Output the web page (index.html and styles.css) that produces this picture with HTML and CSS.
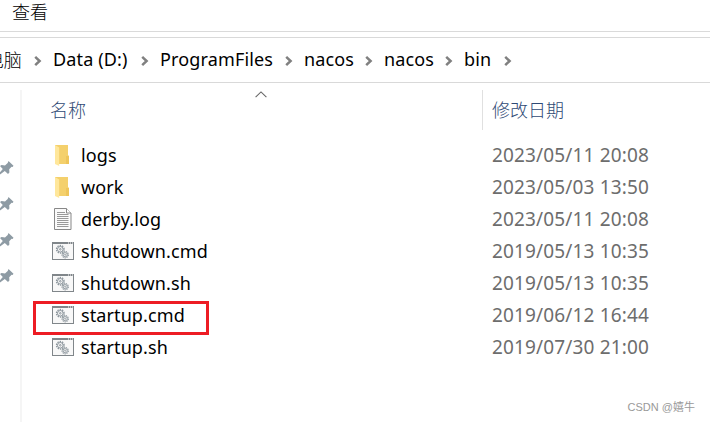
FILE: index.html
```
<!DOCTYPE html>
<html lang="zh-CN">
<head>
    <meta charset="UTF-8">
    <meta name="viewport" content="width=device-width, initial-scale=1.0">
    <title>bin</title>
    <link rel="stylesheet" href="styles.css">
</head>
<body>
    <!-- shared icons -->
    <svg class="sprite">
        <symbol id="chevron" viewBox="0 0 8 10">
            <path d="M1.2 0.9L5.6 5L1.2 9.1" fill="none" stroke="#808080" stroke-width="2.5"/>
        </symbol>
        <symbol id="pin" viewBox="0 0 14 16">
            <path d="M8.5 1L13.5 5.8L12.6 6.9L11.6 6.7L9.2 9.3L9.4 12.5L8 14L4.8 10.9L0 14.5L-1 13.5L2.8 9.1L0 6L1.5 5L5 5.4L7.7 3Z" fill="#8e9ba4"/>
        </symbol>
        <symbol id="folder" viewBox="0 0 16 22">
            <path d="M1 1H14V11L15 12V20H1Z" fill="#f4d06c"/>
            <path d="M12 12H15V20H12Z" fill="#eec55b"/>
            <path d="M1 1L5.2 3.5V22L1 20Z" fill="#ffe79b"/>
        </symbol>
        <symbol id="text-file" viewBox="0 0 18 22">
            <path d="M0.5 0.5H12.5L17 5V21.5H0.5Z" fill="#fafafa" stroke="#888" stroke-width="1"/>
            <path d="M12.5 0.5V5H17" fill="#fff" stroke="#888" stroke-width="1"/>
            <path d="M3 4.5H11M3 6.5H14.5M3 8.5H14.5M3 10.5H14.5M3 12.5H14.5M3 14.5H14.5M3 16.5H14.5M3 18.5H14.5" stroke="#999" stroke-width="1"/>
        </symbol>
        <symbol id="script-file" viewBox="0 0 22 18">
            <rect x="0.5" y="0.5" width="21" height="17" fill="#f8f8f8" stroke="#80868a"/>
            <path d="M0 1H22" stroke="#80868a" stroke-width="2"/>
            <path d="M16 1H17M18 1H19M20 1H21" stroke="#fff"/>
            <g fill="none" stroke="#8a949b">
                <circle cx="8.3" cy="7.3" r="3.8" stroke-width="1.3" stroke-dasharray="1.4 1"/>
                <circle cx="8.3" cy="7.3" r="2.8"/>
                <circle cx="8.3" cy="7.3" r="0.8"/>
                <circle cx="13.2" cy="12.7" r="3.1" stroke-width="1.2" stroke-dasharray="1.3 0.8"/>
                <circle cx="13.2" cy="12.7" r="2.1" stroke-width="0.9"/>
                <circle cx="13.2" cy="12.7" r="0.6" stroke-width="0.8"/>
            </g>
        </symbol>
    </svg>

    <div class="explorer">
        <div class="menu-bar">查看</div>
        <nav class="path-bar">
            <span class="crumb crumb-pc">电脑</span>
            <svg class="chevron"><use href="#chevron"/></svg>
            <span class="crumb crumb-drive">Data (D:)</span>
            <svg class="chevron"><use href="#chevron"/></svg>
            <span class="crumb crumb-programs">ProgramFiles</span>
            <svg class="chevron"><use href="#chevron"/></svg>
            <span class="crumb crumb-nacos">nacos</span>
            <svg class="chevron"><use href="#chevron"/></svg>
            <span class="crumb crumb-nacos">nacos</span>
            <svg class="chevron"><use href="#chevron"/></svg>
            <span class="crumb crumb-bin">bin</span>
            <svg class="chevron"><use href="#chevron"/></svg>
        </nav>
        <div class="content">
            <aside class="sidebar">
                <svg class="pin"><use href="#pin"/></svg>
                <svg class="pin"><use href="#pin"/></svg>
                <svg class="pin"><use href="#pin"/></svg>
                <svg class="pin"><use href="#pin"/></svg>
            </aside>
            <main class="files">
                <div class="header">
                    <div class="header-name">名称
                        <svg class="sort" viewBox="0 0 12 7"><path d="M0.6 6.2L6 0.9L11.4 6.2" fill="none" stroke="#666" stroke-width="1.1"/></svg>
                    </div>
                    <div class="header-date">修改日期</div>
                </div>
                <div class="row">
                    <svg class="icon"><use href="#folder" x="2" y="1" width="16" height="22"/></svg>
                    <span class="name">logs</span>
                    <span class="date">2023/05/11 20:08</span>
                </div>
                <div class="row">
                    <svg class="icon"><use href="#folder" x="2" y="1" width="16" height="22"/></svg>
                    <span class="name">work</span>
                    <span class="date">2023/05/03 13:50</span>
                </div>
                <div class="row">
                    <svg class="icon"><use href="#text-file" x="2" y="1" width="18" height="22"/></svg>
                    <span class="name">derby.log</span>
                    <span class="date">2023/05/11 20:08</span>
                </div>
                <div class="row">
                    <svg class="icon"><use href="#script-file" x="0" y="3" width="22" height="18"/></svg>
                    <span class="name">shutdown.cmd</span>
                    <span class="date">2019/05/13 10:35</span>
                </div>
                <div class="row">
                    <svg class="icon"><use href="#script-file" x="0" y="3" width="22" height="18"/></svg>
                    <span class="name">shutdown.sh</span>
                    <span class="date">2019/05/13 10:35</span>
                </div>
                <div class="row marked">
                    <svg class="icon"><use href="#script-file" x="0" y="3" width="22" height="18"/></svg>
                    <span class="name">startup.cmd</span>
                    <span class="date">2019/06/12 16:44</span>
                </div>
                <div class="row">
                    <svg class="icon"><use href="#script-file" x="0" y="3" width="22" height="18"/></svg>
                    <span class="name">startup.sh</span>
                    <span class="date">2019/07/30 21:00</span>
                </div>
            </main>
        </div>
        <div class="watermark">CSDN @嬉牛</div>
    </div>
</body>
</html>
```
FILE: styles.css
```
* {
    box-sizing: border-box;
}
body {
    margin: 0;
    background-color: #fff;
    font-family: "Noto Sans", "Noto Sans CJK SC", sans-serif;
    font-size: 18px;
    line-height: 24px;
    color: #000;
}
svg {
    display: block;
    flex-shrink: 0;
}
.sprite {
    position: absolute;
    width: 0;
    height: 0;
}
.explorer {
    position: relative;
    width: 710px;
    height: 422px;
    overflow: hidden;
}
.menu-bar {
    height: 32px;
    padding-left: 12px;
    border-bottom: 1px solid #dadada;
    font-family: "Noto Sans CJK SC", sans-serif;
    font-weight: 300;
    line-height: 23px;
    color: #000;
}
.path-bar {
    display: flex;
    align-items: center;
    height: 46px;
    margin-top: 5px;
    border-top: 1px solid #d9d9d9;
    border-bottom: 1px solid #d9d9d9;
    white-space: nowrap;
}
.crumb {
    padding-bottom: 2px;
    letter-spacing: 0.15px;
}
.chevron {
    width: 8px;
    height: 10px;
    margin: 1px 11px 0 0;
}
.crumb-pc {
    display: flex;
    justify-content: flex-end;
    width: 22px;
    margin-right: 12px;
    font-family: "Noto Sans CJK SC", sans-serif;
    font-weight: 300;
}
.crumb-drive {
    width: 88px;
}
.crumb-programs {
    width: 125px;
}
.crumb-nacos {
    width: 61px;
}
.crumb-bin {
    width: 40px;
}
.content {
    display: flex;
    height: 339px;
    padding-top: 7px;
}
.sidebar {
    display: flex;
    flex-direction: column;
    gap: 20px;
    width: 22px;
    padding-top: 70px;
    border-right: 2px solid #f5f5f5;
}
.pin {
    width: 14px;
    height: 16px;
}
.files {
    flex: 1;
}
.header {
    display: flex;
    height: 49px;
    font-family: "Noto Sans CJK SC", sans-serif;
    font-weight: 300;
    color: #2f4a75;
}
.header-name {
    position: relative;
    width: 460px;
    padding: 7px 0 0 28px;
}
.sort {
    position: absolute;
    left: 233px;
    top: 1px;
    width: 12px;
    height: 7px;
}
.header-date {
    height: 40px;
    padding: 7px 0 0 9px;
    border-left: 1px solid #e0e0e0;
}
.row {
    position: relative;
    display: flex;
    align-items: center;
    height: 32px;
    padding-left: 30px;
}
.icon {
    width: 22px;
    height: 24px;
}
.name {
    width: 418px;
    padding-left: 7px;
    letter-spacing: 0.1px;
}
.date {
    color: #6d6d6d;
    font-size: 19px;
    letter-spacing: 0.15px;
}
/* red frame over the highlighted file */
.marked::after {
    content: "";
    position: absolute;
    left: 11px;
    top: 2px;
    box-sizing: border-box;
    width: 176px;
    height: 34px;
    border: 3px solid #ed1c24;
}
.watermark {
    position: absolute;
    right: 15px;
    bottom: 6px;
    font-family: "Liberation Sans", "Noto Sans CJK SC", sans-serif;
    font-size: 11px;
    line-height: 18px;
    color: #999;
}
```
